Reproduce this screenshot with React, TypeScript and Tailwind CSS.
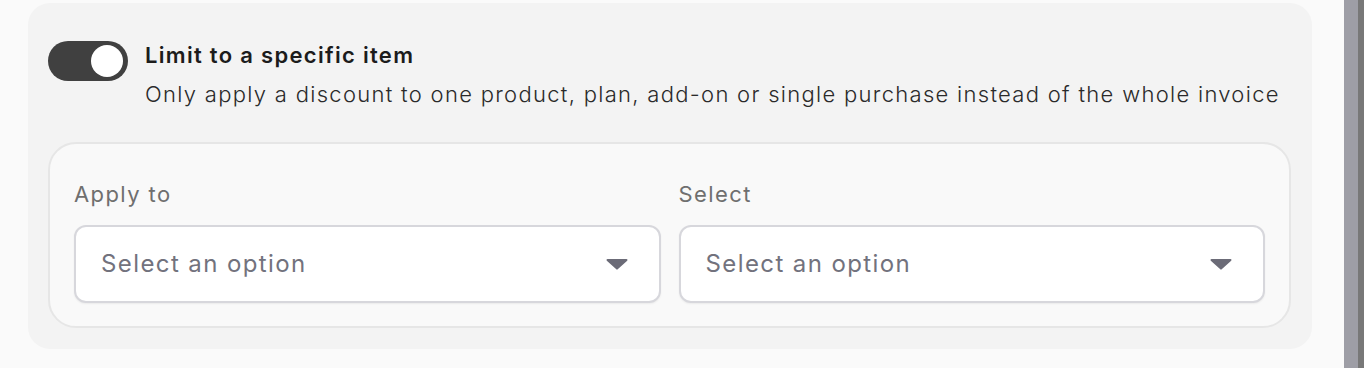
import React from "react";

const Caret = () => (
  <svg width="22" height="12" viewBox="0 0 22 12" className="shrink-0">
    <path d="M1.5 1h19a1 1 0 0 1 .7 1.7l-9.5 8.6a1 1 0 0 1-1.4 0L.8 2.7A1 1 0 0 1 1.5 1z" fill="#6b6b77" />
  </svg>
);

const SelectField = ({ label }: { label: string }) => (
  <div className="flex flex-col flex-1 min-w-0">
    <label className="text-[22px] leading-[28px] tracking-[1.4px] text-[#6f6f6f] mb-[17px] pt-[36px]">{label}</label>
    <button className="h-[78px] w-full flex items-center justify-between pl-[25px] pr-[31px] bg-white border-2 border-[#d7d7dc] rounded-[12px] shadow-[0_1px_2px_rgba(0,0,0,0.06)]">
      <span className="text-[24px] tracking-[1.4px] text-[#72727d]">Select an option</span>
      <Caret />
    </button>
  </div>
);

const App = () => {
  return (
    <div
      className="w-[1364px] h-[368px] bg-[#fafafa] flex overflow-hidden"
      style={{ fontFamily: "Inter, 'Noto Sans', sans-serif" }}
    >
      <div className="flex-1 pl-[28px] pr-[32px] pt-[3px]">
        <div className="bg-[#f3f3f3] rounded-[22px] h-[346px] pl-[20px] pr-[21px] pt-[35px]">
          <div className="flex items-start gap-[17px]">
            <div className="w-[80px] h-[40px] rounded-full bg-[#404040] flex items-center justify-end pr-[5px] mt-[3px] shrink-0">
              <div className="w-[32px] h-[32px] rounded-full bg-white" />
            </div>
            <div className="flex flex-col">
              <div className="text-[22px] leading-[34px] tracking-[1.3px] font-semibold text-[#1c1c1c]">
                Limit to a specific item
              </div>
              <div className="text-[22px] leading-[34px] tracking-[1.3px] text-[#2a2a2a] mt-[5px] font-light">
                Only apply a discount to one product, plan, add-on or single purchase instead of the whole invoice
              </div>
            </div>
          </div>
          <div className="mt-[31px] h-[186px] bg-[#f9f9f9] border-2 border-[#e6e6e6] rounded-[28px] px-[24px] flex gap-[18px]">
            <SelectField label="Apply to" />
            <SelectField label="Select" />
          </div>
        </div>
      </div>
      <div className="w-[20px] h-full flex">
        <div className="w-[14px] bg-[#9e9ea6]" />
        <div className="w-[6px] bg-[#787878]" />
      </div>
    </div>
  );
};

export default App;
